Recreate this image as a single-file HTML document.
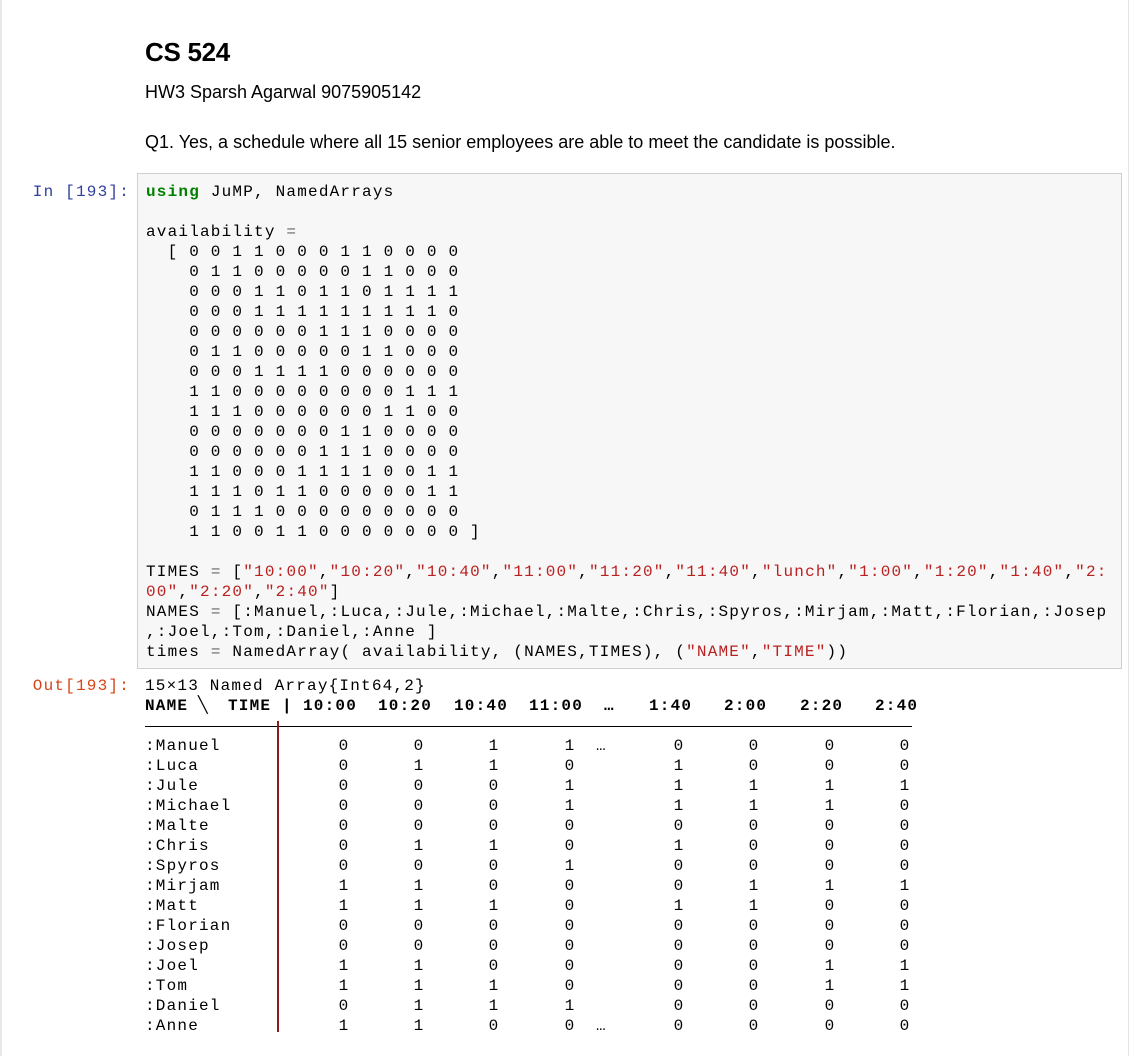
<!DOCTYPE html>
<html><head><meta charset="utf-8">
<style>
html,body{margin:0;padding:0;background:#fff;}
body{width:1134px;height:1056px;position:relative;overflow:hidden;font-family:"Liberation Sans",Arial,sans-serif;color:#000;}
.lb{position:absolute;left:0;top:0;width:2px;height:1056px;background:#e8e8e8;}
.rb{position:absolute;left:1128px;top:0;width:1px;height:1056px;background:#e4e4e4;}
.t{position:absolute;left:145px;white-space:nowrap;}
h1{position:absolute;left:145px;top:37px;margin:0;font-size:26px;font-weight:bold;letter-spacing:-0.3px;}
.p{font-size:18px;}
.mono{font-family:"Liberation Mono","DejaVu Sans Mono",monospace;font-size:16px;line-height:20px;letter-spacing:1.2px;}
.prompt{position:absolute;width:130px;left:0;text-align:right;}
.in{color:#303f9f;}
.out{color:#d84315;}
.box{position:absolute;left:137px;top:173px;width:983px;height:494px;background:#f7f7f7;border:1px solid #cfcfcf;}
pre{margin:0;font:inherit;}
.code{position:absolute;left:146px;top:182px;}
.k{color:#008000;font-weight:bold;}
.s{color:#ba2121;}
.o{color:#666;}
.r{position:absolute;left:0;width:1134px;height:20px;}
.r span{position:absolute;top:0;}
.v{width:20px;text-align:center;}
.bar{position:absolute;left:277px;top:730px;width:2px;height:302px;background:#8b1a1a;}
.hr{position:absolute;left:145px;top:726px;width:767px;height:1px;background:#000;}
</style></head><body>
<div class="lb"></div><div class="rb"></div>
<h1>CS 524</h1>
<div class="t p" style="top:82px">HW3 Sparsh Agarwal 9075905142</div>
<div class="t p" style="top:132px">Q1. Yes, a schedule where all 15 senior employees are able to meet the candidate is possible.</div>

<div class="prompt mono in" style="top:182px">In [193]:</div>
<div class="box"></div>
<div class="code mono"><pre><span class="k">using</span> JuMP, NamedArrays

availability <span class="o">=</span>
  [ 0 0 1 1 0 0 0 1 1 0 0 0 0
    0 1 1 0 0 0 0 0 1 1 0 0 0
    0 0 0 1 1 0 1 1 0 1 1 1 1
    0 0 0 1 1 1 1 1 1 1 1 1 0
    0 0 0 0 0 0 1 1 1 0 0 0 0
    0 1 1 0 0 0 0 0 1 1 0 0 0
    0 0 0 1 1 1 1 0 0 0 0 0 0
    1 1 0 0 0 0 0 0 0 0 1 1 1
    1 1 1 0 0 0 0 0 0 1 1 0 0
    0 0 0 0 0 0 0 1 1 0 0 0 0
    0 0 0 0 0 0 1 1 1 0 0 0 0
    1 1 0 0 0 1 1 1 1 0 0 1 1
    1 1 1 0 1 1 0 0 0 0 0 1 1
    0 1 1 1 0 0 0 0 0 0 0 0 0
    1 1 0 0 1 1 0 0 0 0 0 0 0 ]

TIMES <span class="o">=</span> [<span class="s">"10:00"</span>,<span class="s">"10:20"</span>,<span class="s">"10:40"</span>,<span class="s">"11:00"</span>,<span class="s">"11:20"</span>,<span class="s">"11:40"</span>,<span class="s">"lunch"</span>,<span class="s">"1:00"</span>,<span class="s">"1:20"</span>,<span class="s">"1:40"</span>,<span class="s">"2:</span>
<span class="s">00"</span>,<span class="s">"2:20"</span>,<span class="s">"2:40"</span>]
NAMES <span class="o">=</span> [:Manuel,:Luca,:Jule,:Michael,:Malte,:Chris,:Spyros,:Mirjam,:Matt,:Florian,:Josep
,:Joel,:Tom,:Daniel,:Anne ]
times <span class="o">=</span> NamedArray( availability, (NAMES,TIMES), (<span class="s">"NAME"</span>,<span class="s">"TIME"</span>))</pre></div>

<div class="prompt mono out" style="top:676px">Out[193]:</div>
<div class="mono">
<div class="r" style="top:676px"><span style="left:145px">15×13 Named Array{Int64,2}</span></div>
<div class="r" style="top:696px;font-weight:bold"><span style="left:145px">NAME</span><span style="left:198px">╲</span><span style="left:228px">TIME</span><span style="left:282px">|</span><span style="left:303px">10:00</span><span style="left:378px">10:20</span><span style="left:454px">10:40</span><span style="left:529px">11:00</span><span style="left:604px">…</span><span style="left:649px">1:40</span><span style="left:724px">2:00</span><span style="left:800px">2:20</span><span style="left:875px">2:40</span></div>
</div>
<div class="hr"></div>
<div style="position:absolute;left:277px;top:721px;width:2px;height:10px;background:#8b1a1a"></div>
<div class="bar"></div>
<div class="mono" id="rows">
<div class="r" style="top:736px"><span style="left:145px">:Manuel</span><span class="v" style="left:334px">0</span><span class="v" style="left:409px">0</span><span class="v" style="left:484px">1</span><span class="v" style="left:560px">1</span><span style="left:596px">…</span><span class="v" style="left:669px">0</span><span class="v" style="left:744px">0</span><span class="v" style="left:820px">0</span><span class="v" style="left:895px">0</span></div>
<div class="r" style="top:756px"><span style="left:145px">:Luca</span><span class="v" style="left:334px">0</span><span class="v" style="left:409px">1</span><span class="v" style="left:484px">1</span><span class="v" style="left:560px">0</span><span class="v" style="left:669px">1</span><span class="v" style="left:744px">0</span><span class="v" style="left:820px">0</span><span class="v" style="left:895px">0</span></div>
<div class="r" style="top:776px"><span style="left:145px">:Jule</span><span class="v" style="left:334px">0</span><span class="v" style="left:409px">0</span><span class="v" style="left:484px">0</span><span class="v" style="left:560px">1</span><span class="v" style="left:669px">1</span><span class="v" style="left:744px">1</span><span class="v" style="left:820px">1</span><span class="v" style="left:895px">1</span></div>
<div class="r" style="top:796px"><span style="left:145px">:Michael</span><span class="v" style="left:334px">0</span><span class="v" style="left:409px">0</span><span class="v" style="left:484px">0</span><span class="v" style="left:560px">1</span><span class="v" style="left:669px">1</span><span class="v" style="left:744px">1</span><span class="v" style="left:820px">1</span><span class="v" style="left:895px">0</span></div>
<div class="r" style="top:816px"><span style="left:145px">:Malte</span><span class="v" style="left:334px">0</span><span class="v" style="left:409px">0</span><span class="v" style="left:484px">0</span><span class="v" style="left:560px">0</span><span class="v" style="left:669px">0</span><span class="v" style="left:744px">0</span><span class="v" style="left:820px">0</span><span class="v" style="left:895px">0</span></div>
<div class="r" style="top:836px"><span style="left:145px">:Chris</span><span class="v" style="left:334px">0</span><span class="v" style="left:409px">1</span><span class="v" style="left:484px">1</span><span class="v" style="left:560px">0</span><span class="v" style="left:669px">1</span><span class="v" style="left:744px">0</span><span class="v" style="left:820px">0</span><span class="v" style="left:895px">0</span></div>
<div class="r" style="top:856px"><span style="left:145px">:Spyros</span><span class="v" style="left:334px">0</span><span class="v" style="left:409px">0</span><span class="v" style="left:484px">0</span><span class="v" style="left:560px">1</span><span class="v" style="left:669px">0</span><span class="v" style="left:744px">0</span><span class="v" style="left:820px">0</span><span class="v" style="left:895px">0</span></div>
<div class="r" style="top:876px"><span style="left:145px">:Mirjam</span><span class="v" style="left:334px">1</span><span class="v" style="left:409px">1</span><span class="v" style="left:484px">0</span><span class="v" style="left:560px">0</span><span class="v" style="left:669px">0</span><span class="v" style="left:744px">1</span><span class="v" style="left:820px">1</span><span class="v" style="left:895px">1</span></div>
<div class="r" style="top:896px"><span style="left:145px">:Matt</span><span class="v" style="left:334px">1</span><span class="v" style="left:409px">1</span><span class="v" style="left:484px">1</span><span class="v" style="left:560px">0</span><span class="v" style="left:669px">1</span><span class="v" style="left:744px">1</span><span class="v" style="left:820px">0</span><span class="v" style="left:895px">0</span></div>
<div class="r" style="top:916px"><span style="left:145px">:Florian</span><span class="v" style="left:334px">0</span><span class="v" style="left:409px">0</span><span class="v" style="left:484px">0</span><span class="v" style="left:560px">0</span><span class="v" style="left:669px">0</span><span class="v" style="left:744px">0</span><span class="v" style="left:820px">0</span><span class="v" style="left:895px">0</span></div>
<div class="r" style="top:936px"><span style="left:145px">:Josep</span><span class="v" style="left:334px">0</span><span class="v" style="left:409px">0</span><span class="v" style="left:484px">0</span><span class="v" style="left:560px">0</span><span class="v" style="left:669px">0</span><span class="v" style="left:744px">0</span><span class="v" style="left:820px">0</span><span class="v" style="left:895px">0</span></div>
<div class="r" style="top:956px"><span style="left:145px">:Joel</span><span class="v" style="left:334px">1</span><span class="v" style="left:409px">1</span><span class="v" style="left:484px">0</span><span class="v" style="left:560px">0</span><span class="v" style="left:669px">0</span><span class="v" style="left:744px">0</span><span class="v" style="left:820px">1</span><span class="v" style="left:895px">1</span></div>
<div class="r" style="top:976px"><span style="left:145px">:Tom</span><span class="v" style="left:334px">1</span><span class="v" style="left:409px">1</span><span class="v" style="left:484px">1</span><span class="v" style="left:560px">0</span><span class="v" style="left:669px">0</span><span class="v" style="left:744px">0</span><span class="v" style="left:820px">1</span><span class="v" style="left:895px">1</span></div>
<div class="r" style="top:996px"><span style="left:145px">:Daniel</span><span class="v" style="left:334px">0</span><span class="v" style="left:409px">1</span><span class="v" style="left:484px">1</span><span class="v" style="left:560px">1</span><span class="v" style="left:669px">0</span><span class="v" style="left:744px">0</span><span class="v" style="left:820px">0</span><span class="v" style="left:895px">0</span></div>
<div class="r" style="top:1016px"><span style="left:145px">:Anne</span><span class="v" style="left:334px">1</span><span class="v" style="left:409px">1</span><span class="v" style="left:484px">0</span><span class="v" style="left:560px">0</span><span style="left:596px">…</span><span class="v" style="left:669px">0</span><span class="v" style="left:744px">0</span><span class="v" style="left:820px">0</span><span class="v" style="left:895px">0</span></div>
</div>
</body></html>
